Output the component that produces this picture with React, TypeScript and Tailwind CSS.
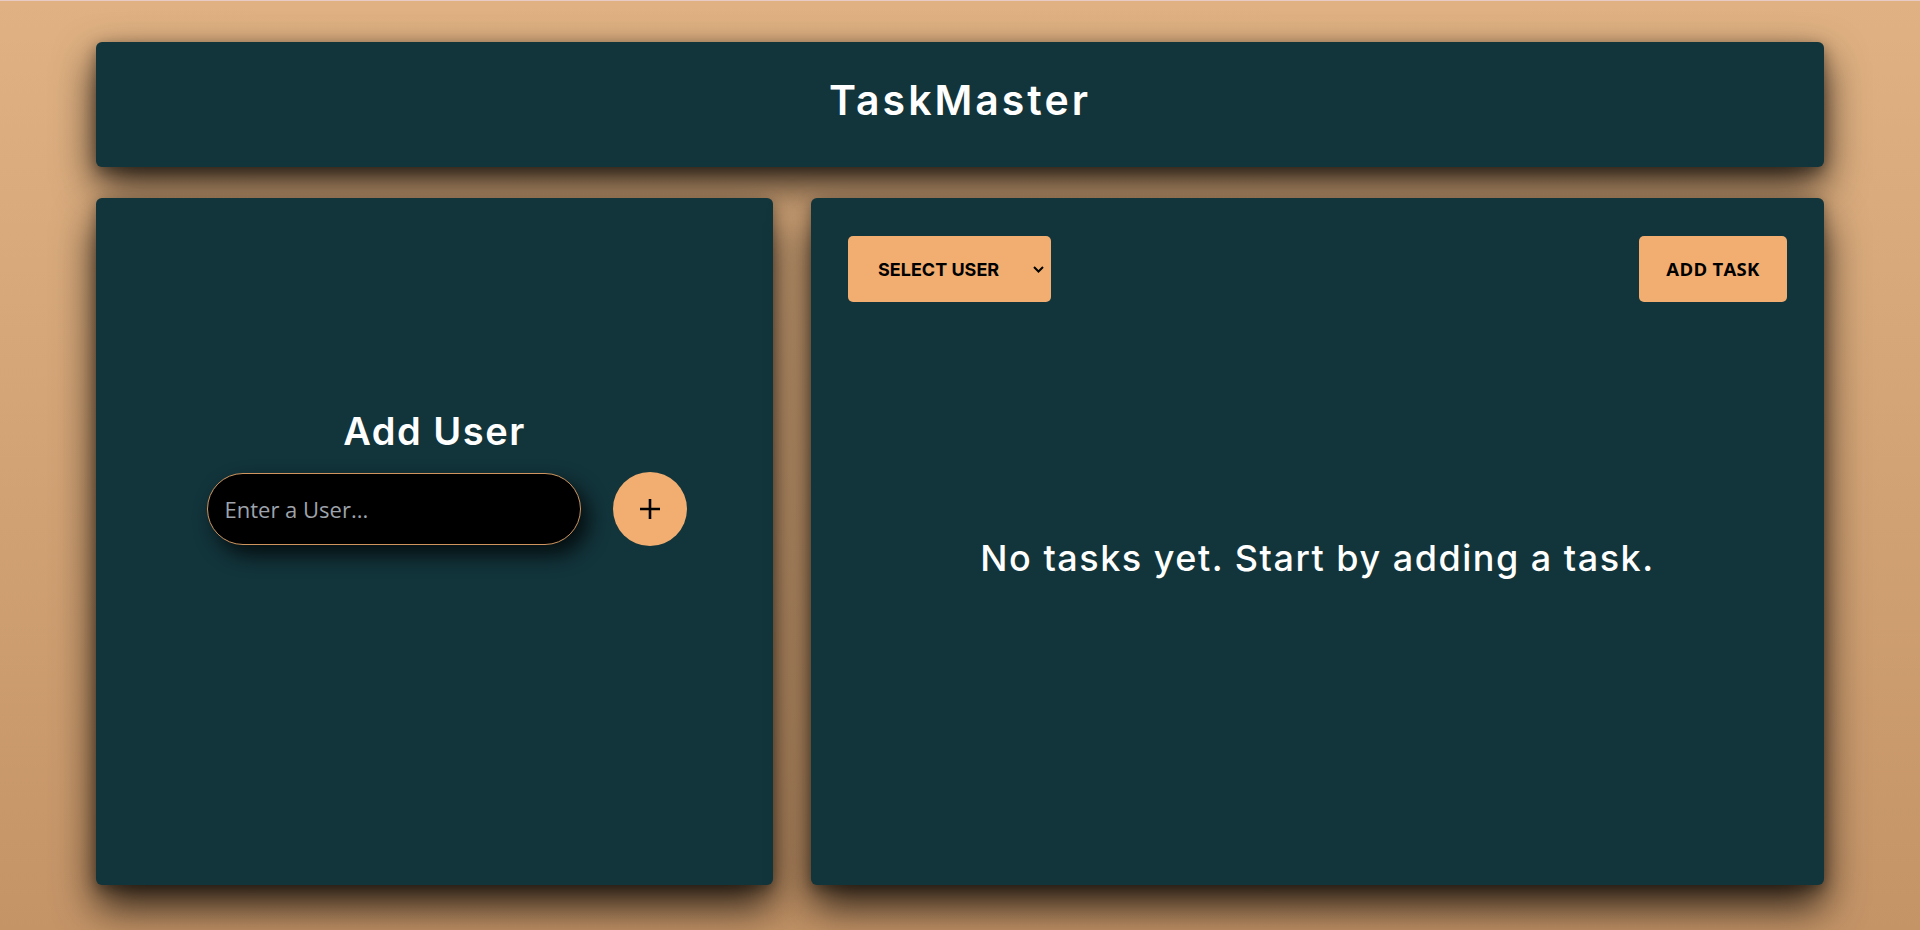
import React from "react";

export default function App() {
  return (
    <div className="min-h-screen w-full bg-linear-to-b from-[#e0b283] to-[#c49467] border-t border-[#e8cbc4] font-['Inter',sans-serif]">
      <div className="mx-[96px] pt-[41px] pb-[45px] flex flex-col gap-[31px]">
        <header className="h-[125px] rounded-[6px] bg-[#12343b] flex items-center justify-center shadow-[0_18px_40px_rgba(0,0,0,0.8),0_4px_14px_rgba(0,0,0,0.35)]">
          <h1 className="text-white text-[41px] leading-[50px] font-semibold tracking-[3px] translate-y-[-5px]">
            TaskMaster
          </h1>
        </header>
        <div className="flex gap-[38px] h-[687px]">
          <section className="w-[677px] shrink-0 rounded-[6px] bg-[#12343b] shadow-[0_22px_40px_rgba(0,0,0,0.8),0_4px_14px_rgba(0,0,0,0.35)] pt-[210px] flex flex-col items-center">
            <h2 className="text-white text-[38px] leading-[46px] font-semibold tracking-[1.5px]">
              Add User
            </h2>
            <div className="mt-[18px] w-full pl-[24px] flex justify-center">
              <div className="flex items-center gap-[32px]">
                <input
                  type="text"
                  placeholder="Enter a User..."
                  className="w-[374px] h-[72px] rounded-full bg-black border border-[#d0955f] pl-[17px] text-[22px] text-white placeholder:text-[#9ea3ab] font-['Open_Sans',sans-serif] outline-none shadow-[8px_10px_20px_rgba(0,0,0,0.75)]"
                />
                <button className="w-[74px] h-[74px] rounded-full bg-[#f1ae70] flex items-center justify-center">
                  <svg width="22" height="22" viewBox="0 0 22 22">
                    <path d="M11 1v20M1 11h20" stroke="#000" strokeWidth="2.6" />
                  </svg>
                </button>
              </div>
            </div>
          </section>
          <section className="flex-1 rounded-[6px] bg-[#12343b] shadow-[0_22px_40px_rgba(0,0,0,0.8),0_4px_14px_rgba(0,0,0,0.35)] px-[37px] pt-[38px] flex flex-col">
            <div className="flex justify-between h-[66px]">
              <div className="w-[203px] h-[66px] rounded-[5px] bg-[#f1ae70] flex items-center pl-[30px] pr-[7px]">
                <span className="text-black text-[18px] font-bold flex-1">SELECT USER</span>
                <svg width="11" height="7" viewBox="0 0 11 7">
                  <path d="M1 1l4.5 4.5L10 1" stroke="#000" strokeWidth="2" fill="none" />
                </svg>
              </div>
              <button className="w-[148px] h-[66px] rounded-[5px] bg-[#f1ae70] text-black text-[18.5px] font-bold tracking-[0.3px] font-['Open_Sans',sans-serif]">
                ADD TASK
              </button>
            </div>
            <p className="mt-[234px] text-center text-white text-[36px] leading-[44px] font-medium tracking-[1.5px]">
              No tasks yet. Start by adding a task.
            </p>
          </section>
        </div>
      </div>
    </div>
  );
}
